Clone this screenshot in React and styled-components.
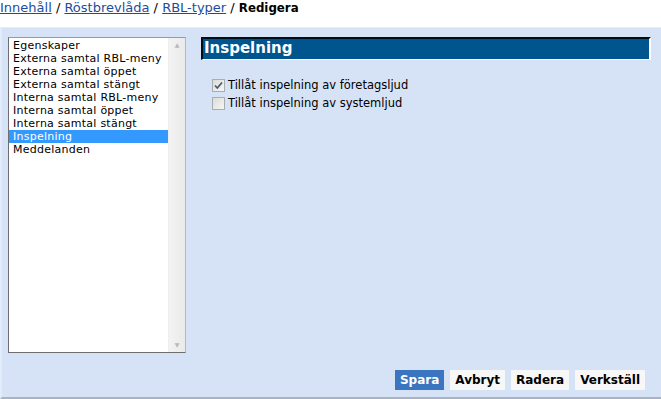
import React from "react";
import styled, { createGlobalStyle } from "styled-components";

const GlobalStyle = createGlobalStyle`
  html, body {
    margin: 0;
    padding: 0;
    background: #ffffff;
    font-family: "DejaVu Sans", Verdana, sans-serif;
  }
`;

const items = [
  "Egenskaper",
  "Externa samtal RBL-meny",
  "Externa samtal öppet",
  "Externa samtal stängt",
  "Interna samtal RBL-meny",
  "Interna samtal öppet",
  "Interna samtal stängt",
  "Inspelning",
  "Meddelanden",
];

// xp-ish checkbox, drawn as a box with an svg tick
function CheckBox({ checked }) {
  return (
    <Box>
      {checked && (
        <svg width="9" height="9" viewBox="0 0 9 9">
          <path d="M1 4.5 L3.3 7 L8 1.5" fill="none" stroke="#4a5a78" strokeWidth="1.8" />
        </svg>
      )}
    </Box>
  );
}

export default function App() {
  return (
    <>
      <GlobalStyle />
      <Page>
        <Crumbs>
          <CrumbLink href="#">Innehåll</CrumbLink> /{" "}
          <CrumbLink href="#">Röstbrevlåda</CrumbLink> /{" "}
          <CrumbLink href="#">RBL-typer</CrumbLink> / <Current>Redigera</Current>
        </Crumbs>
        <Panel>
          <Columns>
            <ListBox>
              <ListItems>
                {items.map((it) => (
                  <ListItem key={it} $selected={it === "Inspelning"}>
                    {it}
                  </ListItem>
                ))}
              </ListItems>
              <ScrollTrack>
                <Arrow>▲</Arrow>
                <Arrow>▼</Arrow>
              </ScrollTrack>
            </ListBox>
            <Content>
              <Heading>Inspelning</Heading>
              <Options>
                <Option>
                  <CheckBox checked />
                  Tillåt inspelning av företagsljud
                </Option>
                <Option>
                  <CheckBox />
                  Tillåt inspelning av systemljud
                </Option>
              </Options>
            </Content>
          </Columns>
          <Actions>
            <Button $primary>Spara</Button>
            <Button>Avbryt</Button>
            <Button>Radera</Button>
            <Button>Verkställ</Button>
          </Actions>
        </Panel>
      </Page>
    </>
  );
}

const Page = styled.div`
  width: 661px;
  height: 399px;
  display: flex;
  flex-direction: column;
`;

const Crumbs = styled.div`
  height: 27px;
  font-size: 13px;
  line-height: 16px;
  color: #000;
`;

const CrumbLink = styled.a`
  color: #1c4d9c;
  text-decoration: underline;
`;

const Current = styled.b`
  font-size: 11.8px;
`;

const Panel = styled.div`
  flex: 1;
  background: #d6e3f7;
  border-top: 1px solid #e6eefb;
  border-left: 2px solid #e2ebf9;
  border-bottom: 2px solid #a9b3c2;
  display: flex;
  flex-direction: column;
  padding: 9px 10px 7px 6px;
  box-sizing: border-box;
`;

const Columns = styled.div`
  flex: 1;
  display: flex;
  gap: 15px;
`;

const ListBox = styled.div`
  width: 178px;
  height: 316px;
  box-sizing: border-box;
  background: #fff;
  border: 1px solid;
  border-color: #9a9a9a #b8b8b8 #6e6e6e #6e6e6e;
  display: flex;
`;

const ListItems = styled.div`
  flex: 1;
  padding-top: 1px;
`;

const ListItem = styled.div`
  font-size: 11px;
  letter-spacing: 0.25px;
  line-height: 13px;
  padding-left: 4px;
  white-space: nowrap;
  color: ${(p) => (p.$selected ? "#fff" : "#000")};
  background: ${(p) => (p.$selected ? "#3399ff" : "transparent")};
`;

const ScrollTrack = styled.div`
  width: 16px;
  background: linear-gradient(to right, #f3f3f3, #eaeaea);
  border-left: 1px solid #eee;
  display: flex;
  flex-direction: column;
  justify-content: space-between;
  align-items: center;
`;

const Arrow = styled.span`
  font-size: 6px;
  color: #b8b8b8;
  line-height: 14px;
`;

const Content = styled.div`
  flex: 1;
  display: flex;
  flex-direction: column;
`;

const Heading = styled.div`
  height: 23px;
  box-sizing: border-box;
  background: #00558f;
  border-top: 2px solid #000e1c;
  border-left: 2px solid #000e1c;
  border-right: 2px solid #ffffff;
  border-bottom: 1px solid #ffffff;
  color: #fff;
  font-weight: bold;
  font-size: 15px;
  line-height: 19px;
  padding-left: 1px;
`;

const Options = styled.div`
  display: flex;
  flex-direction: column;
  gap: 5px;
  padding: 19px 0 0 11px;
`;

const Option = styled.label`
  display: flex;
  align-items: center;
  font-size: 11.5px;
  line-height: 13px;
  color: #000;
`;

const Box = styled.span`
  width: 13px;
  height: 13px;
  box-sizing: border-box;
  margin-right: 3px;
  border: 1px solid #a9adb2;
  background: linear-gradient(135deg, #dcdcd6, #f6f6f4);
  display: flex;
  align-items: center;
  justify-content: center;
`;

const Actions = styled.div`
  display: flex;
  justify-content: flex-end;
  gap: 6px;
  padding-right: 6px;
`;

const Button = styled.button`
  font-family: "DejaVu Sans", Verdana, sans-serif;
  font-weight: bold;
  font-size: 12px;
  height: 20px;
  padding: 0 5px;
  border: none;
  border-radius: 0;
  color: ${(p) => (p.$primary ? "#fff" : "#000")};
  background: ${(p) => (p.$primary ? "#3a76bf" : "#f7f7f7")};
`;
